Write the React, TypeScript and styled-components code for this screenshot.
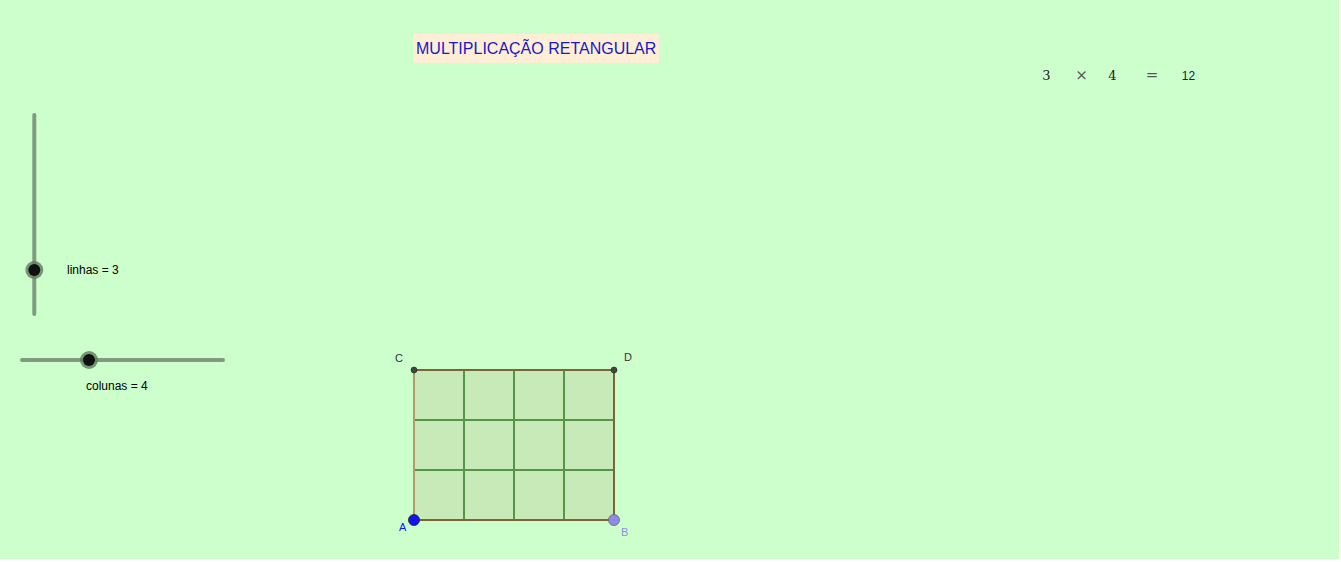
import React from 'react';
import styled, { createGlobalStyle } from 'styled-components';

const GlobalStyle = createGlobalStyle`
  html, body {
    margin: 0;
    padding: 0;
    background: #ffffff;
  }
  body {
    font-family: 'Liberation Sans', Arial, sans-serif;
  }
`;

const COLS = 4;
const ROWS = 3;
const CELL = 50;
const ORIGIN = { x: 414, y: 520 }; // point A in screen coords

const Applet = styled.div`
  position: relative;
  width: 1339px;
  height: 559px;
  background: #ccffcc;
  overflow: hidden;
`;

const Drawing = styled.svg`
  position: absolute;
  inset: 0;
  width: 100%;
  height: 100%;
`;

const Title = styled.div`
  position: absolute;
  left: 413px;
  top: 34px;
  height: 29px;
  padding: 0 3px;
  display: flex;
  align-items: center;
  background: #ffeed6;
  color: #1818c4;
  font-size: 16px;
  white-space: nowrap;
`;

const Formula = styled.div`
  position: absolute;
  left: 1029px;
  top: 64px;
  height: 22px;
  display: grid;
  grid-template-columns: 35px 35px 27px 52px 21px;
  align-items: center;
  color: #222;
`;

const Term = styled.span<{ $sans?: boolean; $op?: boolean }>`
  text-align: center;
  font-family: ${({ $sans }) =>
    $sans ? "'Liberation Sans', Arial, sans-serif" : "'DejaVu Serif', 'Liberation Serif', serif"};
  font-size: ${({ $sans, $op }) => ($sans ? '12px' : $op ? '15px' : '13px')};
  color: ${({ $op }) => ($op ? '#555' : '#222')};
  ${({ $sans }) => ($sans ? 'padding-top: 2px;' : '')}
`;

const SliderLabel = styled.div<{ $left: number; $top: number }>`
  position: absolute;
  left: ${({ $left }) => $left}px;
  top: ${({ $top }) => $top}px;
  font-size: 12px;
  color: #000;
  white-space: nowrap;
`;

const PointLabel = styled.text<{ $tone?: string }>`
  font-family: 'Liberation Sans', Arial, sans-serif;
  font-size: 11px;
  fill: ${({ $tone }) => $tone || '#333'};
`;

const Slider: React.FC<{ x1: number; y1: number; x2: number; y2: number; kx: number; ky: number }> = ({
  x1,
  y1,
  x2,
  y2,
  kx,
  ky,
}) => (
  <g>
    <line x1={x1} y1={y1} x2={x2} y2={y2} stroke="#809b80" strokeWidth={4} strokeLinecap="round" />
    <circle cx={kx} cy={ky} r={9} fill="#5f7a5f" opacity={0.8} />
    <circle cx={kx} cy={ky} r={6} fill="#111" />
  </g>
);

const Grid: React.FC = () => {
  const left = ORIGIN.x;
  const bottom = ORIGIN.y;
  const right = left + COLS * CELL;
  const top = bottom - ROWS * CELL;
  const verticals = Array.from({ length: COLS - 1 }, (_, i) => left + (i + 1) * CELL);
  const horizontals = Array.from({ length: ROWS - 1 }, (_, i) => top + (i + 1) * CELL);

  return (
    <g>
      <rect x={left} y={top} width={right - left} height={bottom - top} fill="#c8e9b8" />
      {verticals.map((x) => (
        <line key={`v${x}`} x1={x} y1={top} x2={x} y2={bottom} stroke="#55954a" strokeWidth={2} />
      ))}
      {horizontals.map((y) => (
        <line key={`h${y}`} x1={left} y1={y} x2={right} y2={y} stroke="#55954a" strokeWidth={2} />
      ))}
      <line x1={left} y1={top} x2={left} y2={bottom} stroke="#b3996a" strokeWidth={2} />
      <line x1={left} y1={top} x2={right} y2={top} stroke="#7a6634" strokeWidth={2} />
      <line x1={right} y1={top} x2={right} y2={bottom} stroke="#7a6634" strokeWidth={2} />
      <line x1={left} y1={bottom} x2={right} y2={bottom} stroke="#7a6634" strokeWidth={2} />

      <circle cx={left} cy={top} r={3} fill="#3c4a3c" stroke="#222" strokeWidth={0.6} />
      <circle cx={right} cy={top} r={3} fill="#3c4a3c" stroke="#222" strokeWidth={0.6} />
      <circle cx={left} cy={bottom} r={5.5} fill="#1414ee" stroke="#222" strokeWidth={0.8} />
      <circle cx={right} cy={bottom} r={5.5} fill="#8c8ce6" stroke="#666" strokeWidth={0.8} />

      <PointLabel x={395} y={362}>C</PointLabel>
      <PointLabel x={624} y={361}>D</PointLabel>
      <PointLabel x={399} y={531} $tone="#1414ee">A</PointLabel>
      <PointLabel x={621} y={536} $tone="#8c8ce6">B</PointLabel>
    </g>
  );
};

const App: React.FC = () => (
  <>
    <GlobalStyle />
    <Applet>
      <Drawing viewBox="0 0 1339 559">
        <Slider x1={34.3} y1={115} x2={34.3} y2={314} kx={34.3} ky={270} />
        <Slider x1={22} y1={360} x2={223} y2={360} kx={89} ky={360} />
        <Grid />
      </Drawing>

      <Title>MULTIPLICAÇÃO RETANGULAR</Title>

      <Formula>
        <Term>3</Term>
        <Term $op>×</Term>
        <Term>4</Term>
        <Term $op>=</Term>
        <Term $sans>12</Term>
      </Formula>

      <SliderLabel $left={67} $top={263}>linhas = 3</SliderLabel>
      <SliderLabel $left={86} $top={379}>colunas = 4</SliderLabel>
    </Applet>
  </>
);

export default App;
